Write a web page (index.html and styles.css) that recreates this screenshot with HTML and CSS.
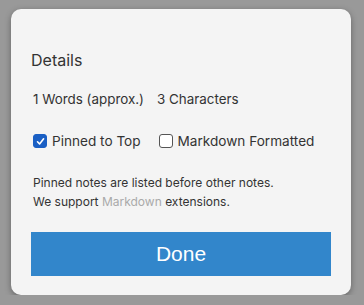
FILE: index.html
```html
<!DOCTYPE html>
<html lang="en">
<head>
  <meta charset="UTF-8" />
  <title>Details</title>
  <link rel="stylesheet" href="styles.css">
</head>
<body>
  <div class="dialog">
    <h2>Details</h2>
    <div class="counts">
      <span>1 Words (approx.)</span>
      <span>3 Characters</span>
    </div>
    <div class="options">
      <label><span class="box checked">
        <svg width="9" height="9" viewBox="0 0 9 9"><path d="M1.5 4.8 L3.6 7 L7.6 1.8" fill="none" stroke="#fff" stroke-width="1.6" stroke-linecap="round" stroke-linejoin="round"/></svg>
      </span>Pinned to Top</label>
      <label><span class="box"></span>Markdown Formatted</label>
    </div>
    <p class="note">Pinned notes are listed before other notes.<br>We support <a href="#">Markdown</a> extensions.</p>
    <button class="done">Done</button>
  </div>
</body>
</html>
```

FILE: styles.css
```css
body {
  margin: 0;
  background: #999;
  font-family: "Inter", "Liberation Sans", sans-serif;
  color: #333;
}
.dialog {
  box-sizing: border-box;
  width: 340px;
  height: 286px;
  margin: 9px 0 0 11px;
  padding: 41px 20px 0 20px;
  background: #f4f4f4;
  border-radius: 10px;
  box-shadow: 0 2px 6px rgba(0,0,0,0.35);
}
h2 {
  margin: 0;
  font-size: 16px;
  font-weight: normal;
  line-height: 20px;
}
.counts {
  margin-top: 20px;
  padding-left: 2px;
  font-size: 13.4px;
  line-height: 18px;
  display: flex;
  gap: 13px;
}
.options {
  margin-top: 24px;
  padding-left: 2px;
  display: flex;
  gap: 18px;
  font-size: 13.6px;
  line-height: 18px;
}
.options label {
  display: flex;
  align-items: center;
  gap: 5px;
}
.box {
  box-sizing: border-box;
  width: 14px;
  height: 14px;
  border: 1px solid #555;
  border-radius: 3px;
  background: #fff;
  display: flex;
  align-items: center;
  justify-content: center;
}
.box.checked {
  background: #1a5fc4;
  border-color: #1a5fc4;
}
.note {
  margin: 23px 0 0 2px;
  font-size: 12px;
  line-height: 19px;
}
.note a {
  color: #aaa;
  text-decoration: none;
}
.done {
  display: block;
  width: 300px;
  height: 44px;
  margin-top: 21px;
  border: 0;
  background: #3286cb;
  color: #fff;
  font-family: "Liberation Sans", sans-serif;
  font-size: 21px;
}
```
